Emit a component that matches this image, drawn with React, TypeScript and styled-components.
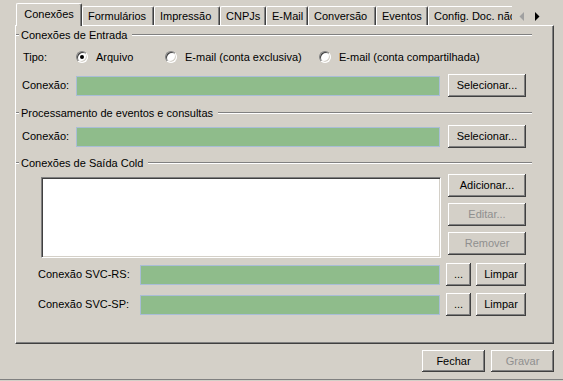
import React from 'react';
import styled, { createGlobalStyle } from 'styled-components';

const GlobalStyle = createGlobalStyle`
  html, body {
    margin: 0;
    padding: 0;
    background: #d4d0c8;
  }
  * {
    box-sizing: border-box;
  }
`;

const Window = styled.div`
  width: 563px;
  height: 380px;
  padding: 3px 9px 0 15px;
  display: flex;
  flex-direction: column;
  background: #d4d0c8;
  border-bottom: 1px solid #808080;
  font-family: 'Liberation Sans', Arial, sans-serif;
  font-size: 11px;
  line-height: 13px;
  color: #000;
`;

const TabBar = styled.div`
  display: flex;
  height: 23px;
  flex: none;
  position: relative;
  z-index: 1;
  margin-bottom: -1px;
`;

const TabList = styled.div`
  display: flex;
  align-items: flex-end;
  width: 506px;
  padding-left: 1px;
  overflow: hidden;
`;

const Tab = styled.div<{ $w: number; $active?: boolean }>`
  flex: 0 0 ${({ $w }) => $w}px;
  height: ${({ $active }) => ($active ? 23 : 19)}px;
  display: flex;
  align-items: ${({ $active }) => ($active ? 'flex-start' : 'center')};
  justify-content: ${({ $active }) => ($active ? 'center' : 'flex-start')};
  padding: ${({ $active }) => ($active ? '4px 0 0 0' : '0 0 0 5px')};
  white-space: nowrap;
  background: #d4d0c8;
  border-top: 1px solid #fff;
  border-left: 1px solid #fff;
  border-right: 1px solid #404040;
  border-radius: 2px 2px 0 0;
  box-shadow: inset -1px 0 #808080;
  margin-bottom: ${({ $active }) => ($active ? 0 : 1)}px;
`;

const Arrows = styled.svg`
  display: block;
  flex: 0 0 42px;
`;

const Panel = styled.div`
  height: 319px;
  flex: none;
  border-top: 1px solid #fff;
  border-left: 1px solid #fff;
  border-right: 1px solid #404040;
  border-bottom: 1px solid #404040;
  box-shadow: inset -1px -1px #808080;
  padding: 3px 21px 0 0;
  display: flex;
  flex-direction: column;
`;

const GroupHeader = styled.div<{ $mt?: number }>`
  display: flex;
  align-items: center;
  height: 12px;
  flex: none;
  margin-top: ${({ $mt }) => $mt ?? 0}px;
`;

const Etch = styled.div<{ $w?: number }>`
  height: 2px;
  border-top: 1px solid #808080;
  border-bottom: 1px solid #fff;
  flex: ${({ $w }) => ($w ? `0 0 ${$w}px` : '1')};
`;

const GroupTitle = styled.span`
  padding: 0 5px 0 2px;
  white-space: nowrap;
`;

const Row = styled.div<{ $mt: number; $pl: number; $h?: number }>`
  display: flex;
  align-items: center;
  flex: none;
  height: ${({ $h }) => $h ?? 23}px;
  margin-top: ${({ $mt }) => $mt}px;
  padding: 0 6px 0 ${({ $pl }) => $pl}px;
`;

const Label = styled.span<{ $w: number }>`
  flex: 0 0 ${({ $w }) => $w}px;
  white-space: nowrap;
`;

const Field = styled.div`
  flex: 1;
  height: 20px;
  background: #8fbc8b;
  border: 1px solid #a9bdd6;
`;

const Button = styled.button<{ $w: number; $h?: number; $ml?: number }>`
  flex: none;
  width: ${({ $w }) => $w}px;
  height: ${({ $h }) => $h ?? 23}px;
  margin-left: ${({ $ml }) => $ml ?? 0}px;
  padding: 0 0 1px 0;
  background: #d4d0c8;
  border: none;
  box-shadow: inset -1px -1px #404040, inset 1px 1px #fff,
    inset -2px -2px #808080;
  font-family: inherit;
  font-size: 11px;
  color: #000;
  &:disabled {
    color: #8f8f8f;
  }
`;

const RadioOption = styled.label<{ $w: number }>`
  flex: 0 0 ${({ $w }) => $w}px;
  display: flex;
  align-items: center;
  gap: 8px;
  white-space: nowrap;
`;

const RadioDot = styled.span<{ $checked?: boolean }>`
  width: 12px;
  height: 12px;
  border-radius: 50%;
  background: #fff;
  border: 1px solid;
  border-color: #808080 #fff #fff #808080;
  box-shadow: inset 1px 1px #404040, inset -1px -1px #d4d0c8;
  display: flex;
  align-items: center;
  justify-content: center;
  &::after {
    content: '';
    width: 4px;
    height: 4px;
    border-radius: 50%;
    background: ${({ $checked }) => ($checked ? '#000' : 'transparent')};
  }
`;

const ListRow = styled.div`
  display: flex;
  align-items: flex-start;
  flex: none;
  margin-top: 5px;
  padding: 0 6px 0 25px;
`;

const ListBox = styled.div`
  flex: 1;
  height: 81px;
  margin-top: 3px;
  margin-right: 7px;
  background: #fff;
  border: 1px solid;
  border-color: #808080 #fff #fff #808080;
  box-shadow: inset 1px 1px #404040, inset -1px -1px #d4d0c8;
`;

const ButtonColumn = styled.div`
  display: flex;
  flex-direction: column;
  gap: 6px;
  width: 78px;
`;

const Footer = styled.div`
  display: flex;
  justify-content: flex-end;
  gap: 6px;
  margin-top: 6px;
`;

const tabs = [
  { label: 'Conexões', w: 66, active: true },
  { label: 'Formulários', w: 72 },
  { label: 'Impressão', w: 66 },
  { label: 'CNPJs', w: 46 },
  { label: 'E-Mail', w: 42 },
  { label: 'Conversão', w: 68 },
  { label: 'Eventos', w: 52 },
  { label: 'Config. Doc. não Eletrônicos', w: 140 },
];

export default function App(): JSX.Element {
  return (
    <Window>
      <GlobalStyle />
      <TabBar>
        <TabList>
          {tabs.map((t) => (
            <Tab key={t.label} $w={t.w} $active={t.active}>
              {t.label}
            </Tab>
          ))}
        </TabList>
        <Arrows width="42" height="23" viewBox="0 0 42 23">
          <polygon points="12,9 12,18 7.5,13.5" fill="#a0a0a0" />
          <polygon points="23,9 27.5,13.5 23,18" fill="#000" />
        </Arrows>
      </TabBar>

      <Panel>
        <GroupHeader>
          <Etch $w={3} />
          <GroupTitle>Conexões de Entrada</GroupTitle>
          <Etch />
        </GroupHeader>
        <Row $mt={9} $pl={7} $h={14}>
          <Label $w={53}>Tipo:</Label>
          <RadioOption $w={89}>
            <RadioDot $checked />
            Arquivo
          </RadioOption>
          <RadioOption $w={154}>
            <RadioDot />
            E-mail (conta exclusiva)
          </RadioOption>
          <RadioOption $w={180}>
            <RadioDot />
            E-mail (conta compartilhada)
          </RadioOption>
        </Row>
        <Row $mt={10} $pl={6}>
          <Label $w={54}>Conexão:</Label>
          <Field />
          <Button $w={78} $ml={8}>
            Selecionar...
          </Button>
        </Row>

        <GroupHeader $mt={10}>
          <Etch $w={3} />
          <GroupTitle>Processamento de eventos e consultas</GroupTitle>
          <Etch />
        </GroupHeader>
        <Row $mt={6} $pl={6}>
          <Label $w={54}>Conexão:</Label>
          <Field />
          <Button $w={78} $ml={8}>
            Selecionar...
          </Button>
        </Row>

        <GroupHeader $mt={9}>
          <Etch $w={3} />
          <GroupTitle>Conexões de Saída Cold</GroupTitle>
          <Etch />
        </GroupHeader>
        <ListRow>
          <ListBox />
          <ButtonColumn>
            <Button $w={78}>Adicionar...</Button>
            <Button $w={78} disabled>
              Editar...
            </Button>
            <Button $w={78} disabled>
              Remover
            </Button>
          </ButtonColumn>
        </ListRow>
        <Row $mt={5} $pl={22}>
          <Label $w={102}>Conexão SVC-RS:</Label>
          <Field />
          <Button $w={25} $ml={6}>
            ...
          </Button>
          <Button $w={50} $ml={5}>
            Limpar
          </Button>
        </Row>
        <Row $mt={7} $pl={22}>
          <Label $w={102}>Conexão SVC-SP:</Label>
          <Field />
          <Button $w={25} $ml={6}>
            ...
          </Button>
          <Button $w={50} $ml={5}>
            Limpar
          </Button>
        </Row>
      </Panel>

      <Footer>
        <Button $w={63} $h={22}>
          Fechar
        </Button>
        <Button $w={63} $h={22} disabled>
          Gravar
        </Button>
      </Footer>
    </Window>
  );
}
